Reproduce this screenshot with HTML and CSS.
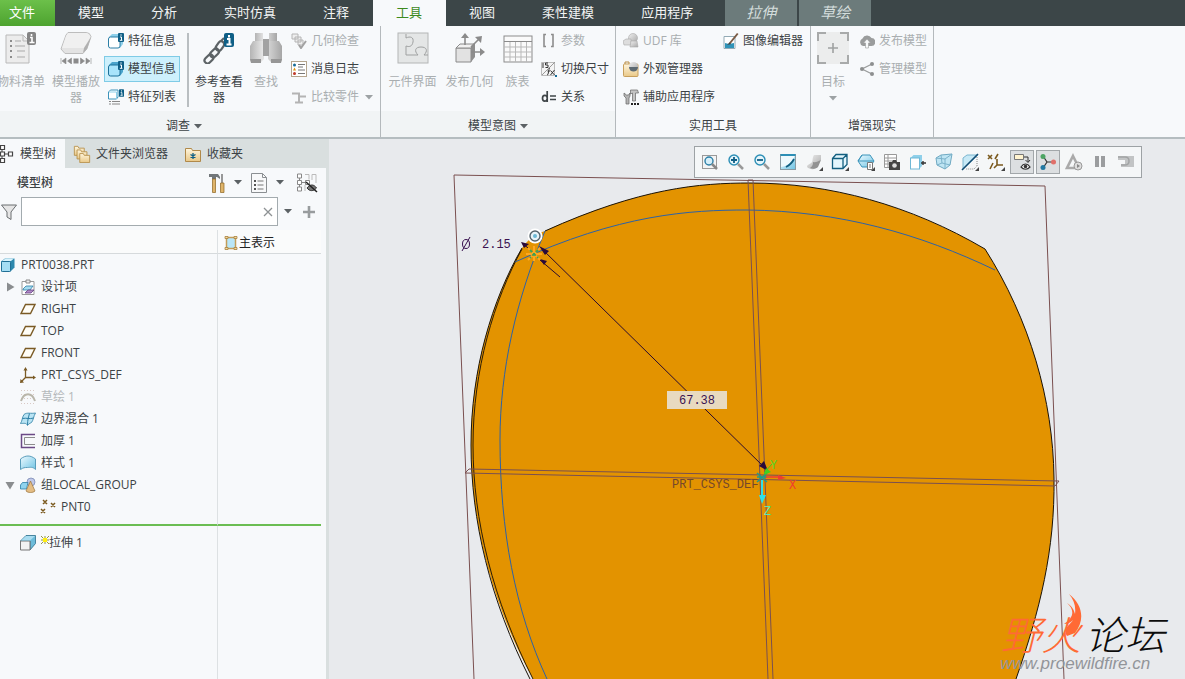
FILE: index.html
```html
<!DOCTYPE html>
<html lang="zh-CN">
<head>
<meta charset="utf-8">
<title>PRT0038</title>
<link rel="stylesheet" href="styles.css">
</head>
<body>
<svg class="defs" aria-hidden="true">
  <defs>
    <linearGradient id="gGrey" x1="0" y1="0" x2="1" y2="1"><stop offset="0" stop-color="#f0f0f0"/><stop offset="1" stop-color="#a8a8a8"/></linearGradient>
    <linearGradient id="gBlue" x1="0" y1="0" x2="1" y2="1"><stop offset="0" stop-color="#eefaff"/><stop offset="1" stop-color="#6fc4e4"/></linearGradient>
    <linearGradient id="gTan" x1="0" y1="0" x2="0" y2="1"><stop offset="0" stop-color="#fff6de"/><stop offset="1" stop-color="#e9c887"/></linearGradient>
    <linearGradient id="gBino" x1="0" y1="0" x2="1" y2="0"><stop offset="0" stop-color="#b4b4b4"/><stop offset=".4" stop-color="#e6e6e6"/><stop offset="1" stop-color="#a6a6a6"/></linearGradient>
  </defs>
  <symbol id="plane" viewBox="0 0 16 16"><path d="M5.500 3.500H15L10.500 12.500H1Z" fill="#fffdf6" stroke="#7a5a24" stroke-width="1.400"/></symbol>
  <symbol id="caret" viewBox="0 0 8 5"><path d="M0 0H8L4 4.500Z" fill="currentColor"/></symbol>
  <symbol id="info" viewBox="0 0 6 9"><rect width="6" height="9" rx="1" fill="#0f5f86"/><path d="M3 1.300v1.400M2 4h1.500v3M1.800 7.300h2.600" stroke="#fff" stroke-width="1" fill="none"/></symbol>
  <symbol id="pts" viewBox="0 0 16 16"><path d="M3 1l4 4M7 1L3 5M11 4l4 4M15 4l-4 4M1 10l4 4M5 10l-4 4" stroke="#7b5a1e" stroke-width="1.500"/></symbol>
</svg>

<nav class="tabs">
  <button class="tab file">文件</button>
  <button class="tab">模型</button>
  <button class="tab">分析</button>
  <button class="tab">实时仿真</button>
  <button class="tab">注释</button>
  <button class="tab active">工具</button>
  <button class="tab">视图</button>
  <button class="tab">柔性建模</button>
  <button class="tab">应用程序</button>
  <button class="tab context first">拉伸</button>
  <button class="tab context">草绘</button>
</nav>

<header class="ribbon">
  <section class="group investigate">
    <div class="tools">
      <button class="big off bom">
        <svg viewBox="0 0 32 32"><path d="M1 3h17l6 6v22H1Z" fill="#ececec" stroke="#b9b9b9"/><path d="M18 3v6h6" fill="none" stroke="#b9b9b9"/><path d="M5 8h2v2H5zM5 13h2v2H5zM5 18h2v2H5zM5 24h2v2H5z" fill="#8d8d8d"/><path d="M10 9h6M10 14h10M12 19h8M12 25h8" stroke="#a9a9a9"/><rect x="22" y="0" width="9" height="13" rx="2" fill="#858585"/><path d="M26.500 2v2M25 5.500h2v4.500M24.500 10.500h5" stroke="#fff" stroke-width="1.600" fill="none"/></svg>
        <span>物料清单</span></button>
      <button class="big off player">
        <svg viewBox="0 0 32 32"><path d="M8 0.500h18q4 0 5 4l-4 12-4 5H5L1 17 6 3Z" fill="#e3e3e3" stroke="#bdbdbd"/><path d="M8 1h18q3 0 4.500 4L24 16H2L6 4Z" fill="#f0f0f0"/><path d="M24 16l7-11-4 12-4 4Z" fill="#b0b0b0"/><path d="M1 26v6M6 26v6L2 29ZM11.500 26v6L7.500 29ZM31 26v6M26 26v6l4-3ZM20.500 26v6l4-3Z" fill="#8b8b8b" stroke="#8b8b8b" stroke-width=".6"/><path d="M13.500 26.500h5v5h-5z" fill="#8b8b8b"/></svg>
        <span>模型播放器</span></button>
      <div class="stack">
        <button class="small"><svg viewBox="0 0 16 16"><path d="M1 4l3-3h11v10l-3 4H1Z" fill="#8fd0ea"/><rect x=".5" y="4" width="11.500" height="11" rx="2" fill="#fff" stroke="#2c7fa6"/><use href="#info" x="10" y="0" width="6" height="9"/></svg>特征信息</button>
        <button class="small pressed"><svg viewBox="0 0 16 16"><path d="M1 4l3-3h11v10l-3 4H1Z" fill="#4aa4cc"/><rect x=".5" y="4" width="11.500" height="11" rx="2" fill="#a8e4fb" stroke="#1d7099"/><use href="#info" x="10" y="0" width="6" height="9"/></svg>模型信息</button>
        <button class="small"><svg viewBox="0 0 16 16"><path d="M.5 3l2-2H10v7L8.500 10H.5Z" fill="#fff" stroke="#3d93ba"/><path d="M1 3h7.500V10" stroke="#8fd0ea" fill="none"/><use href="#info" x="11" y="0" width="5" height="8"/><path d="M1 12.500h2M4 12.500h8M1 15h2M4 15h8" stroke="#888"/></svg>特征列表</button>
      </div>
      <i class="rule"></i>
      <button class="big ref">
        <svg viewBox="0 0 32 32"><g fill="none" stroke="#5d6366" stroke-width="2.200"><rect x="-5" y="-3" width="10" height="6" rx="3" transform="translate(6 27) rotate(-45)"/><rect x="-5" y="-3" width="10" height="6" rx="3" transform="translate(11.500 21) rotate(-45)"/><rect x="-5" y="-3" width="10" height="6" rx="3" transform="translate(17 14) rotate(-55)"/><path d="M18 9l3-3"/></g><rect x="21" y="1" width="10" height="14" rx="2" fill="#0f5f86"/><path d="M26 3v2.500M24 7h2.500v5.500M23.500 12.500h5" stroke="#fff" stroke-width="2" fill="none"/></svg>
        <span>参考查看器</span></button>
      <button class="big off find">
        <svg viewBox="0 0 32 32"><path d="M5 1h8v8H5zM19 1h8v8h-8z" fill="url(#gBino)"/><path d="M3 9h10l1 2v16l-3 3H1L0 27V14ZM19 9h10l3 5v13l-1 3H21l-3-3V11Z" fill="url(#gBino)"/><path d="M13 7h6v17h-6z" fill="#a2a2a2"/><path d="M0 27h11v4H1zM21 27h11l-1 4H21z" fill="#969696"/></svg>
        <span>查找</span></button>
      <div class="stack">
        <button class="small off"><svg viewBox="0 0 16 16"><path d="M1 1h6v5H1zM4 4h6v5H4zM7 7h5v5H7z" fill="#eee" stroke="#b4b4b4"/><path d="M8 12l2 3 5-7" fill="none" stroke="#a2a2a2" stroke-width="2"/></svg>几何检查</button>
        <button class="small"><svg viewBox="0 0 16 16"><rect x=".5" y=".5" width="15" height="15" fill="#fff" stroke="#b5a58e"/><circle cx="3.500" cy="4" r="1.500" fill="#176c98"/><path d="M2 9.500l1.500-3 1.500 3Z" fill="#d9930e"/><circle cx="3.500" cy="12.500" r="1.500" fill="#c03a2b"/><path d="M7 3.500h7M7 6h5M7 9h7M7 12.500h7" stroke="#777"/></svg>消息日志</button>
        <button class="small off"><svg viewBox="0 0 16 16"><path d="M1 4.500h7v3h7M8 7.500v5M4 13.500h8" fill="none" stroke="#b4b4b4" stroke-width="2"/></svg>比较零件<svg class="caret gap"><use href="#caret"/></svg></button>
      </div>
    </div>
    <footer>调查<svg class="caret"><use href="#caret"/></svg></footer>
  </section>

  <section class="group intent">
    <div class="tools">
      <button class="big off wide">
        <svg viewBox="0 0 32 32"><rect x="1" y="1" width="30" height="30" fill="#e4e6e6" stroke="#b4b6b6"/><path d="M9 2v4c4-2 8-1 7 4s-4 5-7 4v9h12c-4-4-3-8 3-8s7 4 3 8h4" fill="none" stroke="#9fa1a1"/></svg>
        <span>元件界面</span></button>
      <button class="big off wide">
        <svg viewBox="0 0 32 32"><path d="M2 16h15v14H2z" fill="#e2e2e2" stroke="#8a8a8a"/><path d="M2 16l4-4h15l-4 4z" fill="#f1f1f1" stroke="#8a8a8a"/><path d="M17 16l4-4v13l-4 5z" fill="#8e8e8e"/><path d="M11 13V6M17 15l8-8M17 20h9" stroke="#8b8b8b" stroke-width="1.600"/><path d="M11 1l4 5H7zM28 4l-1 7-6-6zM31 20l-5 4v-8z" fill="#8b8b8b"/></svg>
        <span>发布几何</span></button>
      <button class="big off narrow">
        <svg viewBox="0 0 32 32"><rect x="2" y="4" width="28" height="26" fill="#fafafa" stroke="#8b8b8b"/><path d="M2 9.500h28" stroke="#8b8b8b"/><path d="M2 15h28M2 20h28M2 25h28M8 10v20M13.500 10v20M19 10v20M24.500 10v20" stroke="#b9b9b9"/></svg>
        <span>族表</span></button>
      <div class="stack">
        <button class="small off"><svg viewBox="0 0 16 16"><path d="M5 1.500H3v12h2M10 1.500h2v12h-2" fill="none" stroke="#8d8d8d" stroke-width="1.600"/></svg>参数</button>
        <button class="small"><svg viewBox="0 0 16 16"><path d="M.5 1.500h13v13H.5z" fill="#f4f4f4" stroke="#bbb"/><path d="M1 14L14 1" stroke="#999"/><path d="M2 2v5M7 2H4.500v2H7v2.500H4.500M6 14c2 0 1-6 3-7M6.500 10H9M9.500 9.500l4 4.500M13.500 9l-4 5" fill="none" stroke="#333"/><path d="M14 14h2v2h-2z" fill="#176c98"/></svg>切换尺寸</button>
        <button class="small"><svg viewBox="0 0 16 16"><path d="M6.200 2v11M6 8.500c0-3-4.500-3-4.500.8S6 13 6 10M9 7h6M9 10.500h6" fill="none" stroke="#3f4548" stroke-width="1.700"/></svg>关系</button>
      </div>
    </div>
    <footer>模型意图<svg class="caret"><use href="#caret"/></svg></footer>
  </section>

  <section class="group utility">
    <div class="tools">
      <div class="stack first-stack">
        <button class="small off"><svg viewBox="0 0 16 16"><circle cx="10" cy="5" r="4.500" fill="url(#gGrey)" stroke="#aaa" stroke-width=".6"/><path d="M0 8l3-2h5v6H1z" fill="#ddd" stroke="#aaa" stroke-width=".6"/><path d="M8 8h6l1 6H7z" fill="url(#gGrey)" stroke="#aaa" stroke-width=".6"/></svg>UDF 库</button>
        <button class="small"><svg viewBox="0 0 16 16"><rect x=".5" y="3" width="14.500" height="12.500" rx="1" fill="url(#gTan)" stroke="#c79f5c"/><path d="M2 3V1h4v2" fill="none" stroke="#b98d45"/><circle cx="10.500" cy="5.500" r="4.500" fill="url(#gGrey)"/><path d="M6 6a4.500 4.500 0 0 0 9 0Z" fill="#5d6a72"/></svg>外观管理器</button>
        <button class="small"><svg viewBox="0 0 16 16"><path d="M1 4v3l2 2v6h3V9l1-2V4L5.500 6h-2Z" fill="#b4b4b4" stroke="#666" stroke-width=".7"/><path d="M7.500 1h7l1 3h-3v8h-3V4l-2 1Z" fill="#c4c4c4" stroke="#666" stroke-width=".7"/><path d="M8 14h2v2H8zM11 14h2v2h-2zM14 14h2v2h-2z" fill="#222"/></svg>辅助应用程序</button>
      </div>
      <div class="stack">
        <button class="small"><svg viewBox="0 0 16 16"><path d="M1 3.500h11v12H1z" fill="#fff" stroke="#93aab5"/><path d="M2 10l4 1 5-1v5H2z" fill="#2f93b8"/><path d="M5.500 10.500L14 0l1.500 1L7 11.500Z" fill="#7a5a44"/><path d="M4 12l2.500-2.500L8 11Z" fill="#444"/></svg>图像编辑器</button>
      </div>
    </div>
    <footer>实用工具</footer>
  </section>

  <section class="group reality">
    <div class="tools">
      <button class="big off target">
        <svg viewBox="0 0 32 32"><rect width="32" height="32" fill="#eceded"/><path d="M1 9V1h8M23 1h8v8M31 23v8h-8M9 31H1v-8" fill="none" stroke="#a8aaaa" stroke-width="2"/><path d="M16 11v10M11 16h10" stroke="#9fa1a1" stroke-width="1.600"/></svg>
        <span>目标</span><svg class="caret"><use href="#caret"/></svg></button>
      <div class="stack">
        <button class="small off"><svg viewBox="0 0 16 16"><path d="M4 13a4 4 0 0 1-.5-7.500A5 5 0 0 1 12.500 5 4 4 0 0 1 12 13Z" fill="#9a9c9c"/><path d="M8 6l3.500 4H9.500v5h-3v-5h-2Z" fill="#f7f9fa" stroke="#9a9c9c" stroke-width=".6"/></svg>发布模型</button>
        <button class="small off"><svg viewBox="0 0 16 16"><path d="M13 3L3 8l10 5" fill="none" stroke="#9a9c9c" stroke-width="1.300"/><circle cx="13" cy="3" r="2" fill="#8d8f8f"/><circle cx="3" cy="8" r="2" fill="#8d8f8f"/><circle cx="13" cy="13" r="2" fill="#8d8f8f"/></svg>管理模型</button>
      </div>
    </div>
    <footer>增强现实</footer>
  </section>
</header>

<main class="work">
  <aside class="panel">
    <nav class="ptabs">
      <button class="ptab on"><svg viewBox="0 0 16 20"><path d="M2 5v11M3 10h6" stroke="#444"/><path d="M.5 1.500h4v4h-4zM.5 8h4v4h-4zM.5 14.500h4v4h-4zM8.500 8h4v4h-4z" fill="#fff" stroke="#444" stroke-width="1.200"/></svg>模型树</button>
      <button class="ptab"><svg viewBox="0 0 20 20"><g fill="url(#gTan)" stroke="#b8924e"><path d="M1.500 1.500h4l1 2h6v8h-11z"/><path d="M4.500 5.500h4l1 2h6v8h-11z"/><path d="M7.500 9.500h4l1 2h6v8h-11z"/></g></svg>文件夹浏览器</button>
      <button class="ptab"><svg viewBox="0 0 18 18"><path d="M1.500 3.500h6l1 2h8v11h-15z" fill="url(#gTan)" stroke="#b0894a"/><path d="M9 8v6M6.500 9.500l5 3M11.500 9.500l-5 3" stroke="#0f5f86" stroke-width="1.300"/></svg>收藏夹</button>
    </nav>
    <div class="ptitle">
      <h2>模型树</h2>
      <button class="tool" aria-label="设置"><svg viewBox="0 0 18 20"><path d="M1 1h9l2 3v2L9 4H8v2H4V4H1Z" fill="#72777a"/><path d="M4.500 6h3v13.500h-3z" fill="#dfb46a" stroke="#8c6420" stroke-width=".7"/><path d="M14 1v9" stroke="#777" stroke-width="1.500"/><path d="M12.500 10h3.500v9.500h-3.500z" fill="#dfb46a" stroke="#8c6420" stroke-width=".7"/></svg></button>
      <svg class="caret"><use href="#caret"/></svg>
      <button class="tool" aria-label="显示"><svg viewBox="0 0 18 20"><path d="M1.500.5h11l4 4v15h-15z" fill="#f8f9fa" stroke="#8b8f92"/><path d="M12.500.5v4h4" fill="none" stroke="#8b8f92"/><path d="M4 7h2v2H4zM4 11h2v2H4zM4 15h2v2H4z" fill="#555"/><path d="M7.500 8h6M7.500 12h6M7.500 16h6" stroke="#777"/></svg></button>
      <svg class="caret"><use href="#caret"/></svg>
      <button class="tool last" aria-label="列"><svg viewBox="0 0 20 20"><path d="M2.500 4v11M3 9.500h6" stroke="#888"/><path d="M.5 1h4v4h-4zM.5 7.500h4v4h-4zM.5 14h4v4h-4zM8.500 7.500h4v4h-4z" fill="#fff" stroke="#888"/><path d="M8 1.500h4v5M15 7V1.500h4V10M8 12v6" fill="none" stroke="#bbb"/><path d="M10 15c3-4 7-4 9.500 0-3 3.500-7 3.500-9.500 0Z" fill="#777" stroke="#333"/><path d="M9 9l11 10" stroke="#222" stroke-width="1.500"/></svg></button>
    </div>
    <div class="search">
      <svg class="funnel" viewBox="0 0 16 16"><path d="M.5 1h15L10 8v7.500L6 13V8Z" fill="#e5e5e5" stroke="#6a6e70"/></svg>
      <label class="field"><input type="text" aria-label="搜索"><svg viewBox="0 0 10 10"><path d="M1 1l8 8M9 1L1 9" stroke="#8e9294" stroke-width="1.300"/></svg></label>
      <svg class="caret"><use href="#caret"/></svg>
      <button class="plus" aria-label="添加"><svg viewBox="0 0 12 12"><path d="M6 0v12M0 6h12" stroke="#989c9e" stroke-width="2.600"/></svg></button>
    </div>
    <table class="tree">
      <thead><tr><th></th><th><div class="cell"><svg viewBox="0 0 14 16"><rect x="2.500" y="2.500" width="9" height="11" fill="#b9e6f7" stroke="#c39d58" stroke-width="1.500"/><path d="M1 1.500h3v2H1zM10 1.500h3v2h-3zM1 12.500h3v2H1zM10 12.500h3v2h-3z" fill="#f3dba6" stroke="#a8813c" stroke-width=".8"/></svg>主表示</div></th></tr></thead>
      <tbody>
        <tr><td><div class="cell root"><svg viewBox="0 0 16 16"><path d="M1 4.500L5 1.500h9.500v9l-4 4H1Z" fill="#2d88ad"/><rect x="1.500" y="4.500" width="9" height="10" rx="1" fill="#a5def4" stroke="#206f95"/><path d="M2 4l3.500-2.500h8.500L11 4Z" fill="#d8f3fd"/></svg>PRT0038.PRT</div></td><td></td></tr>
        <tr><td><div class="cell"><svg class="tri" viewBox="0 0 10 10"><path d="M2 .5v9L9.500 5Z" fill="#8a8d8f"/></svg><svg viewBox="0 0 16 16"><path d="M2 2.500h12v13H2z" fill="#fff" stroke="#9a9a9a"/><path d="M6 1h4v3H6z" fill="#eee" stroke="#888"/><path d="M3 10l3-3h7l-3 4H3z" fill="#a7dcf0" stroke="#2c7fa6" stroke-width=".8"/><path d="M5 14l3-3h6l-3 3z" fill="#b08ac7" stroke="#663f80" stroke-width=".8"/></svg>设计项</div></td><td></td></tr>
        <tr><td><div class="cell leaf"><svg><use href="#plane"/></svg>RIGHT</div></td><td></td></tr>
        <tr><td><div class="cell leaf"><svg><use href="#plane"/></svg>TOP</div></td><td></td></tr>
        <tr><td><div class="cell leaf"><svg><use href="#plane"/></svg>FRONT</div></td><td></td></tr>
        <tr><td><div class="cell leaf"><svg viewBox="0 0 16 16"><path d="M5.500 2v8.500H14M5.500 10.500L1.500 14.500" fill="none" stroke="#7a5a24" stroke-width="1.300"/><path d="M5.500 0l2 3.500h-4zM16 10.500l-3 2v-4zM0 16l.5-4 3.500 3.500z" fill="#7a5a24"/></svg>PRT_CSYS_DEF</div></td><td></td></tr>
        <tr><td><div class="cell leaf dim"><svg viewBox="0 0 16 16"><path d="M1 1.500h15M1 5.500h15M1 9.500h15M1 14.500h15" stroke="#d9c9c5" stroke-dasharray="1 2"/><path d="M1 12c3-9 11-9 14 0" fill="none" stroke="#b9b6aa" stroke-width="2"/></svg>草绘 1</div></td><td></td></tr>
        <tr><td><div class="cell leaf"><svg viewBox="0 0 16 16"><path d="M4 3.500C7 1 11 3 15.500 2c-2 3-2 7-4 9.500-2 1-3 1.500-4 3-1-3-4-2-7-2 2-3 1.500-6 3.500-9Z" fill="#b9e4f4" stroke="#4b93b3"/><path d="M2.500 7.500c4-1 7 1 11-.5M9.500 2.500C8.500 6 7.500 9 7.500 14" fill="none" stroke="#2c7fa6"/></svg>边界混合 1</div></td><td></td></tr>
        <tr><td><div class="cell leaf"><svg viewBox="0 0 16 16"><path d="M15 1.500H1.500v13H15" fill="none" stroke="#6b4a86" stroke-width="1.500"/><path d="M15 4.500H4.500v7H15" fill="none" stroke="#8c8c8c"/></svg>加厚 1</div></td><td></td></tr>
        <tr><td><div class="cell leaf"><svg viewBox="0 0 16 16"><path d="M.5 4c5-4 10-4 15 0v10.500c-3-3-5-2-8-2s-4 0-7 2Z" fill="url(#gBlue)" stroke="#5a9dbb"/></svg>样式 1</div></td><td></td></tr>
        <tr><td><div class="cell"><svg class="tri" viewBox="0 0 10 10"><path d="M.5 2h9L5 9.500Z" fill="#8a8d8f"/></svg><svg viewBox="0 0 16 16"><circle cx="11" cy="5" r="4" fill="#c0c8e8" stroke="#707fae" stroke-width=".7"/><path d="M.5 8l2-2.500H8L6.500 12h-6z" fill="#8fd3ee" stroke="#2c7fa6" stroke-width=".8"/><path d="M10.500 4l4.500 10c-2 2-7 2-9 0Z" fill="#e4bd84" stroke="#9a733a" stroke-width=".7"/></svg>组LOCAL_GROUP</div></td><td></td></tr>
        <tr><td><div class="cell deep"><svg><use href="#pts"/></svg>PNT0</div></td><td></td></tr>
        <tr class="insert"><td></td><td></td></tr>
        <tr class="after"><td><div class="cell leaf"><svg viewBox="0 0 16 16"><path d="M.5 6L6 .5h9.500v8L10 15V6Z" fill="#6cbcda" stroke="#2c6f8c" stroke-width=".8"/><path d="M.5 6h9.500v9H.5z" fill="#f2f2f2" stroke="#777"/><path d="M1 5.500L6 1h9L10 5.500Z" fill="#a8dcf0"/></svg><span class="fresh"><svg viewBox="0 0 8 8"><path d="M0 0l8 8M8 0L0 8M4 0v8M0 4h8" stroke="#77771a" stroke-width=".8"/><path d="M2 2h4v4H2z" fill="#ffee10"/></svg></span>拉伸 1</div></td><td></td></tr>
      </tbody>
    </table>
    <div class="rest"></div>
  </aside>

  <section class="canvas">
    <svg class="scene" viewBox="329 139 856 540" preserveAspectRatio="xMinYMin slice">
      <path d="M522 248Q532 234 545 231C640 188 700 183 750 183C830 183 910 205 985 249C1030 320 1053 400 1054 478C1055 550 1040 610 1016 679H533C490 600 471 520 471 445C471 370 492 300 522 248Z" fill="#e39300"/>
      <path d="M545 231C640 188 700 183 750 183C830 183 910 205 985 249C1030 320 1053 400 1054 478C1055 550 1040 610 1016 679M522 248C492 300 471 370 471 445C471 520 490 600 530 679" fill="none" stroke="#1a1206"/>
      <path d="M522 249C494 300 473 370 473 445C473 520 493 600 533 679" fill="none" stroke="#2a1c08"/>
      <path d="M515 262C620 214 690 210 747 210C840 211 920 234 995 270M545 231C516 300 500 370 500 440C500 530 515 610 547 679" fill="none" stroke="#2c62a8"/>
      <path d="M474 679L454 175L1045 186L1064 679M748 180L768 679M753 180L773 679M748 180H753M469 469L1059 481L1055 486L465 473Z" fill="none" stroke="#7a5050"/>
      <path d="M541 248L765 468M560 277L540 260M522 243L534 253" stroke="#2a0a2e" fill="none"/>
      <path d="M539 246L549 251L545 255ZM540 259L547 261L544 265ZM768 471L759 466L764 461ZM521 242L529 244L524 248Z" fill="#2a0a3a"/>
      <g fill="none" stroke-width="2"><path d="M528 248l12 12M540 248l-12 12M534 246v15M526 254h16" stroke="#ffa720"/><path d="M530 250l8 8M538 250l-8 8" stroke="#3fa050" stroke-dasharray="3 2"/></g>
      <circle cx="535" cy="236" r="7.500" fill="#fff"/><circle cx="535" cy="236" r="5" fill="#e6f3f8" stroke="#55626a" stroke-width="1.400"/><circle cx="535" cy="236" r="2" fill="#6bb8d4"/>
      <rect x="667" y="391" width="60" height="18" fill="#e8dac0"/>
      <path d="M757 473l10 9M767 473l-10 9M757 477h10" stroke="#1c9b8c" stroke-width="1.500"/>
      <path d="M766 477h16" stroke="#f03b30" stroke-width="1.500"/><path d="M786 478l-8-3v5z" fill="#f03b30"/>
      <path d="M764 473l8-9" stroke="#3fcf20"/><path d="M764 475l2-7 5 4z" fill="#3fcf20"/>
      <path d="M762 480v18" stroke="#30e0e8" stroke-width="2"/><path d="M762 504l-3-9h7z" fill="#30e0e8"/>
      <ellipse cx="466" cy="244" rx="3.500" ry="4.500" fill="none" stroke="#3a1250"/>
      <path d="M462 251L470 237" stroke="#3a1250"/>
      <g class="cad"><text x="482" y="248" class="dim-text">2.15</text><text x="679" y="404" class="dim-text">67.38</text><text x="672" y="488" class="csys">PRT_CSYS_DEF</text><text x="770" y="469" fill="#58d820">Y</text><text x="789" y="489" fill="#f03b30">X</text><text x="764" y="515" fill="#58e8b0">Z</text></g>
    </svg>

    <div class="viewbar">
      <button aria-label="重新调整"><svg viewBox="0 0 18 18"><rect x="1.500" y="2.500" width="14" height="13" fill="#f4f4f4" stroke="#9a9a9a"/><circle cx="8" cy="8" r="4" fill="#d7eff9" stroke="#2c7fa6" stroke-width="1.400"/><path d="M11 11l5 5" stroke="#888" stroke-width="2.500"/></svg></button>
      <button aria-label="放大"><svg viewBox="0 0 18 18"><circle cx="7" cy="7" r="5" fill="#e5f5fb" stroke="#2c8fb6" stroke-width="1.400"/><path d="M7 4v6M4 7h6" stroke="#0f5f86" stroke-width="1.800"/><path d="M11 11l5 5" stroke="#999" stroke-width="2.500"/></svg></button>
      <button aria-label="缩小"><svg viewBox="0 0 18 18"><circle cx="7" cy="7" r="5" fill="#e5f5fb" stroke="#2c8fb6" stroke-width="1.400"/><path d="M4 7h6" stroke="#0f5f86" stroke-width="1.800"/><path d="M11 11l5 5" stroke="#999" stroke-width="2.500"/></svg></button>
      <button aria-label="重画"><svg viewBox="0 0 18 18"><rect x="1.500" y="1.500" width="15" height="15" fill="url(#gBlue)" stroke="#8a9ba3"/><path d="M2 2h14C14 9 9 13 2 14Z" fill="#eef9fd"/><path d="M1.500 2h15" stroke="#2c8fb6" stroke-width="2"/><path d="M15 6c-2 4-4 6-8 8" fill="none" stroke="#135f80" stroke-width="1.800"/></svg></button>
      <button aria-label="渲染选项"><svg viewBox="0 0 18 18"><path d="M9 2h7v5c-2 1-2 3-3 6-2 4-8 4-11 1 0-3 4-3 5-5 1-1 0-4 2-7Z" fill="url(#gGrey)"/><path d="M8 9c3 1 5-1 8-2l-3 7c-2 2-5 2-8 1 3-2 3-4 3-6Z" fill="#929292"/><path class="drop" d="M18 14v4h-4z"/></svg></button>
      <button aria-label="显示样式"><svg viewBox="0 0 18 18"><path d="M1.500 5.500L5 1.500h11v10l-4 4H1.500ZM1.500 5.500H12v10M12 5.500l4-4" fill="#e3f6fd" stroke="#135f80" stroke-width="1.300"/><path class="drop" d="M18 14v4h-4z"/></svg></button>
      <button aria-label="已保存方向"><svg viewBox="0 0 18 18"><path d="M5 2h8l4 6-4 6H5L1 8Z" fill="url(#gBlue)" stroke="#3b94ba"/><path d="M1 8h16M5 2L1 8" fill="none" stroke="#3b94ba"/><path d="M10.500 9.500h5v7h-5z" fill="#fff" stroke="#777"/><path d="M12 12h2M12 14h2" stroke="#777"/><path class="drop" d="M18 14v4h-4z"/></svg></button>
      <button aria-label="视图管理器"><svg viewBox="0 0 18 18"><path d="M1.500 1.500h12v13h-12zM1.500 5h12M1.500 8h12M1.500 11h12M5 2v12" fill="#fff" stroke="#999"/><path d="M6 9h3l1-2h3l1 2h3v8H6z" fill="#444"/><circle cx="11.500" cy="12.500" r="2.300" fill="#ddd"/></svg></button>
      <button aria-label="外观"><svg viewBox="0 0 18 18"><path d="M1.500 5l3-3H13v11l-3 3H1.500Z" fill="#8fd0ea"/><rect x="1.500" y="5" width="9" height="11" fill="#fff" stroke="#6fb8d6"/><path d="M12 10h5M14 8v4" stroke="#333" stroke-width="1.400"/></svg></button>
      <button aria-label="透视图"><svg viewBox="0 0 18 18"><path d="M1 5l5-3 11-1-2 11-5 4-8-4Z" fill="#bfe5f3" stroke="#6fa9c2"/><path d="M1 5l9 1 7-5M10 6v10M6 2l1 8 8 2M7 10l-5 2" fill="none" stroke="#7bb2ca"/></svg></button>
      <button aria-label="截面"><svg viewBox="0 0 18 18"><path d="M2 5l4-3h11L2 16Z" fill="#c7e9f6" stroke="#7ab6d0"/><path d="M16 4v9l-3 3H5" fill="none" stroke="#888" stroke-dasharray="1 1"/><path d="M1 17L17 1" stroke="#124c72" stroke-width="1.600"/><path class="drop" d="M18 14v4h-4z"/></svg></button>
      <button aria-label="基准显示"><svg viewBox="0 0 18 18"><path d="M1 2l4 4M5 2L1 6M11 1L8 6M6 10l-3 6M10 6v6h6M10 12l-3 3" fill="none" stroke="#7b5a1e" stroke-width="1.600"/><path class="drop" d="M18 14v4h-4z"/></svg></button>
      <button class="on" aria-label="注释显示"><svg viewBox="0 0 18 18"><path d="M1.500 1.500h9v5h-9z" fill="#fff3cf" stroke="#777"/><path d="M11 4h4v5M12.500 7l2.500 2.500L17 7" fill="none" stroke="#333"/><path d="M8 14c2.500-4 6.500-4 9 0-2.500 3-6.500 3-9 0Z" fill="#fff" stroke="#333" stroke-width="1.200"/><circle cx="12.500" cy="13.500" r="1.800" fill="#333"/></svg></button>
      <button class="on" aria-label="旋转中心"><svg viewBox="0 0 18 18"><path d="M4 3l4 6-4 6M8 9h7" fill="none" stroke="#333" stroke-width="1.200"/><circle cx="4" cy="3.500" r="2.500" fill="#4da564"/><circle cx="4" cy="14.500" r="2.500" fill="#2279a3"/><circle cx="14.500" cy="9" r="2.500" fill="#e0706a"/></svg></button>
      <button aria-label="模拟"><svg viewBox="0 0 18 18"><path d="M8 3l6 12H2Z" fill="none" stroke="#aaa" stroke-width="2.600"/><circle cx="13" cy="13" r="4" fill="#ddd" stroke="#999"/><path d="M12 11l3 2-3 2z" fill="#888"/></svg></button>
      <button aria-label="暂停"><svg viewBox="0 0 18 18"><path d="M4 3h4v11H4zM10 3h4v11h-4z" fill="#9b9d9f"/></svg></button>
      <button aria-label="播放"><svg viewBox="0 0 18 18"><path d="M1 3h16v11H4v-3h4V7H1Z" fill="#c2c4c5"/><path d="M1 4h7q4 0 4 4t-4 4H4" fill="none" stroke="#a2a4a5" stroke-width="1.500"/></svg></button>
    </div>

    <div class="brand">
      <div class="name"><span class="fire">野火</span><svg viewBox="0 0 20 44"><path d="M6 1C20 12 22 27 12 40L4 43C-1 36 7 32 10 27C7 30 4 31 1 31C12 24 11 16 4 10C9 13 11 17 12 21C13 13 11 7 6 1Z" fill="#ff6a35"/></svg><span>论坛</span></div>
      <div class="site">www.proewildfire.cn</div>
    </div>
  </section>
</main>
</body>
</html>
```

FILE: styles.css
```css
* { box-sizing: border-box; }
body {
  margin: 0;
  height: 100vh;
  display: flex;
  flex-direction: column;
  overflow: hidden;
  font: 12px/16px "Open Sans", "Noto Sans CJK SC", sans-serif;
  color: #3c4245;
  background: #f7f9fb;
}
button {
  font: inherit;
  color: inherit;
  background: none;
  border: 0;
  padding: 0;
  white-space: nowrap;
}
svg { display: block; flex: none; }
.defs { position: absolute; width: 0; height: 0; }
.caret { width: 8px; height: 5px; color: #5b6164; }

/* Main tabs */
.tabs { display: flex; height: 26px; flex: none; background: #3c4648; }
.tab { padding: 0 24px 2px 23px; font-size: 13px; line-height: 24px; color: #f2f4f4; }
.tab.file { padding: 0 20px 2px 9px; background: linear-gradient(#6cc04a, #4da32f); color: #fff; }
.tab.active { background: #f7f9fb; color: #3d8a1e; }
.tab.context { background: #6c7b7b; color: #d5dedd; font-size: 15px; font-style: italic; padding: 0 21px 2px; margin-left: 2px; }
.tab.context.first { margin-left: 8px; }

/* Ribbon */
.ribbon { display: flex; flex: none; height: 113px; border-bottom: 2px solid #b5bdc0; }
.group { display: flex; flex-direction: column; border-right: 1px solid #b4b9bc; flex: none; }
.investigate { width: 381px; }
.intent { width: 235px; }
.utility { width: 195px; }
.reality { width: 123px; }
.tools { flex: 1; display: flex; align-items: flex-start; }
.group footer { height: 26px; padding-top: 4px; display: flex; align-items: center; justify-content: center; gap: 4px; }
.investigate footer { padding-right: 12px; }
.investigate footer, .intent footer { background: #f1f4f5; }
.big { width: 52px; flex: none; padding-top: 6px; display: flex; flex-direction: column; align-items: center; gap: 10px; white-space: normal; }
.big svg:not(.caret) { width: 32px; height: 32px; }
.big span { width: 50px; }
.off { color: #a9aeb0; }
.off .caret { color: #9da2a4; }
.bom { margin-left: -5px; }
.player { margin: 0 2px 0 3px; }
.rule { width: 2px; height: 74px; margin: 7px 4px 0 7px; background: #b9bec1; }
.find { width: 42px; }
.wide { width: 57px; }
.intent .tools { padding-left: 3px; }
.narrow { width: 39px; }
.target { width: 44px; }
.target .caret { margin-top: -4px; }
.stack { display: flex; flex-direction: column; align-items: flex-start; gap: 2px; padding-top: 2px; }
.small { height: 26px; display: flex; align-items: center; gap: 4px; padding: 0 3px; border: 1px solid transparent; }
.small > svg:not(.caret) { width: 16px; height: 16px; }
.small .gap { margin-left: 2px; }
.pressed { background: #cdf0fc; border-color: #7fcbe6; }
.utility .tools { padding-left: 3px; }
.first-stack { width: 100px; }

/* Work area */
.work { flex: 1; display: flex; min-height: 0; }
.panel { width: 329px; flex: none; display: flex; flex-direction: column; border-right: 3px solid #d9dfdf; }
.ptabs { display: flex; flex: none; height: 29px; background: #d9dfdf; margin-right: -3px; }
.ptab { display: flex; align-items: center; gap: 5px; padding: 0 8px; }
.ptab.on { background: #f7f9fb; padding: 0 9px 0 0; gap: 4px; }
.ptab.on svg { width: 16px; height: 20px; }
.ptab svg { width: 18px; height: 18px; }
.ptitle { display: flex; align-items: center; height: 29px; padding: 0 8px 0 17px; gap: 8px; flex: none; }
.ptitle h2 { margin: 0 auto 0 0; font-size: 12px; font-weight: 500; }
.tool svg { width: 18px; height: 20px; }
.tool.last { margin-left: 4px; }
.tool.last svg { width: 22px; }
.search { display: flex; align-items: center; flex: none; height: 29px; padding: 0 11px 0 1px; gap: 4px; }
.funnel { width: 16px; height: 16px; }
.field { flex: 1; display: flex; align-items: center; height: 29px; border: 1px solid #a3abaf; background: #fff; padding-right: 4px; }
.field input { flex: 1; min-width: 0; height: 26px; border: 0; outline: 0; background: none; font: inherit; }
.field svg { width: 10px; height: 10px; }
.search .caret { margin: 0 7px 0 2px; }
.plus svg { width: 12px; height: 12px; }
.tree { width: 321px; margin-top: 4px; border-spacing: 0; table-layout: fixed; flex: none; }
.tree th { height: 24px; padding: 0; border-bottom: 1px solid #d6dadc; background: #fafbfb; font-weight: 400; color: #222; }
.tree th:first-child { width: 218px; }
.tree th:first-child, .tree td:first-child { border-right: 1px solid #dde1e3; }
.tree td { padding: 0; height: 22px; }
.cell { display: flex; align-items: center; height: 22px; gap: 5px; padding-left: 5px; white-space: nowrap; }
.cell svg { width: 16px; height: 16px; }
.cell .tri { width: 10px; height: 10px; }
th .cell { padding: 3px 0 0 5px; gap: 0; }
.cell.root { padding-left: 0; }
.cell.leaf { padding-left: 20px; }
.cell.deep { padding-left: 40px; }
.cell.dim { color: #b4b8ba; }
.tree .insert td { height: 8px; border-bottom: 2px solid #6bbd52; }
.tree .after td { height: 34px; }
.cell .fresh { margin: 0 -5px 6px 0; }
.fresh svg { width: 8px; height: 8px; }
.rest { flex: 1; width: 218px; border-right: 1px solid #dde1e3; }

/* Graphics window */
.canvas { flex: 1; position: relative; overflow: hidden; background: #e8eaed; }
.scene { position: absolute; inset: 0; width: 100%; height: 100%; }
.cad { font: 12px "Liberation Mono", monospace; }
.dim-text { fill: #3a1250; }
.csys { fill: #75472b; }
.viewbar { position: absolute; top: 7px; right: 43px; height: 32px; display: flex; align-items: center; padding: 0 2px; border: 1px solid #9da2a5; background: #f5f7f8; }
.viewbar button { width: 24px; height: 24px; margin: 0 1px; display: grid; place-items: center; border: 1px solid transparent; }
.viewbar button.on { background: #dcdfe1; border-color: #a2a7aa; }
.viewbar svg { width: 18px; height: 18px; }
.drop { fill: #444; }
.brand { position: absolute; right: 20px; bottom: 8px; }
.name { display: flex; align-items: center; font-size: 40px; line-height: 44px; font-weight: 300; font-style: italic; color: #0c0c0c; }
.fire { color: #ff6a35; }
.name svg { width: 20px; height: 44px; margin: -40px 2px 0 -18px; }
.site { margin-left: -1px; font: italic 17px/14px "Liberation Sans", sans-serif; color: #92959a; }
```
